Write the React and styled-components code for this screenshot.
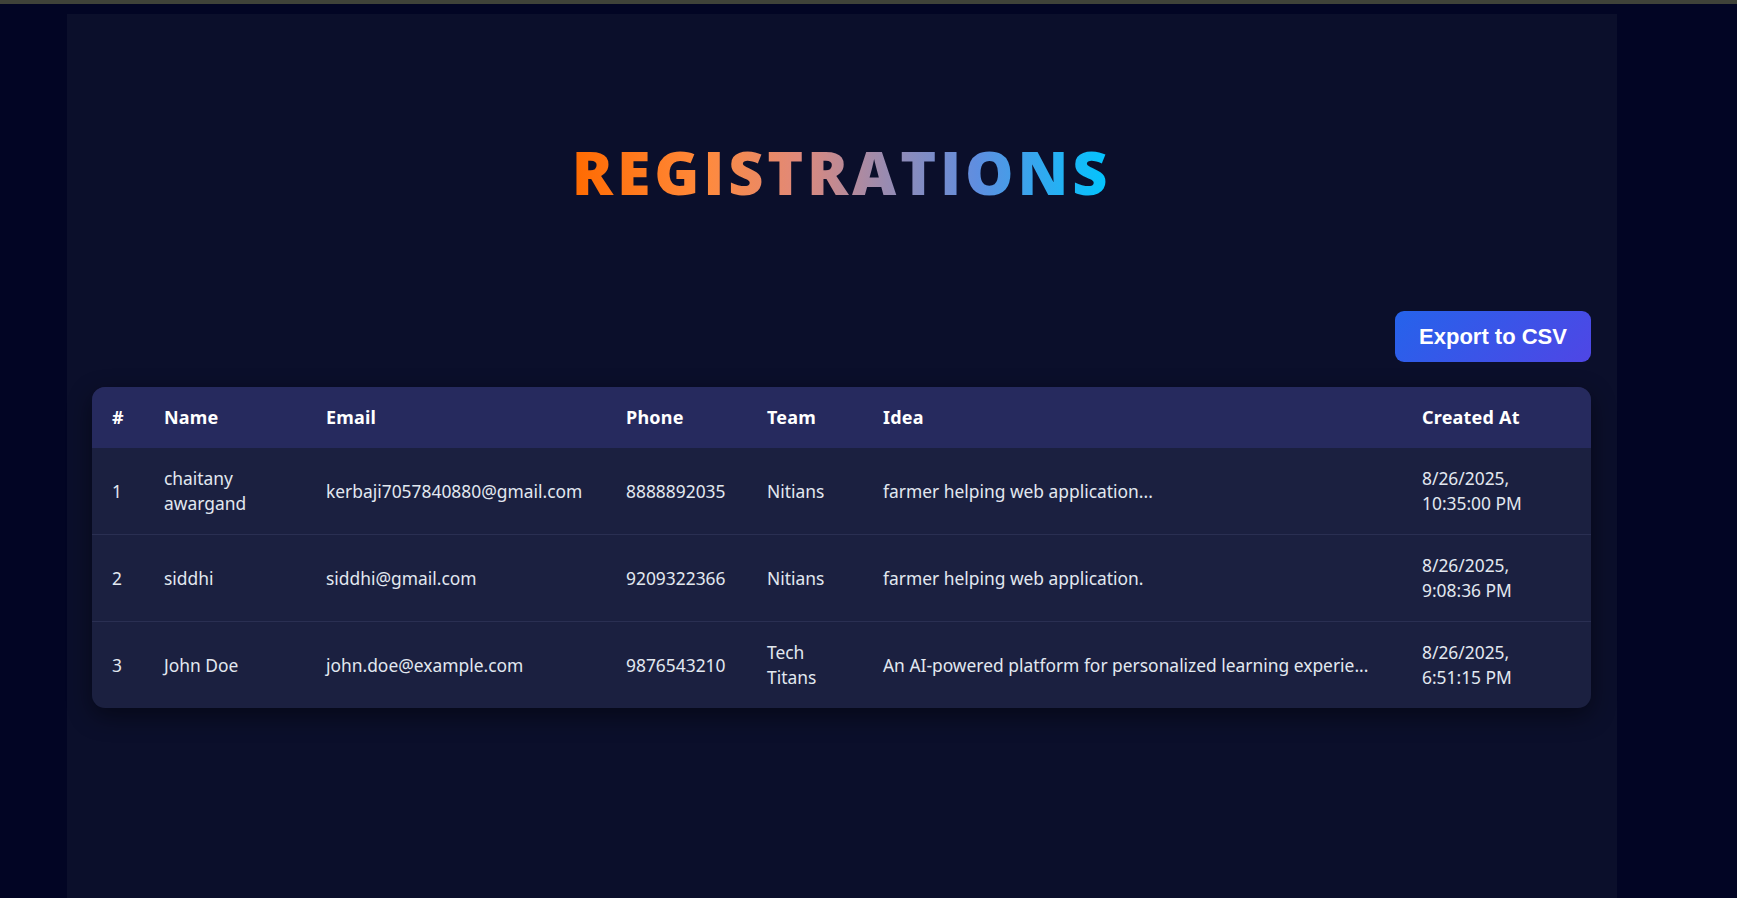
import React from "react";
import styled, { createGlobalStyle } from "styled-components";

const Global = createGlobalStyle`
  html, body { margin: 0; padding: 0; background: #020524; }
  body { font-family: "Noto Sans", "Open Sans", sans-serif; color: #e2e8f0; }
  * { box-sizing: border-box; }
`;

const TopStrip = styled.div`
  height: 4px;
  background: #3f4239;
`;

const Page = styled.div`
  min-height: 894px;
  padding: 10px 120px 0 67px;
  display: flex;
`;

const Panel = styled.main`
  width: 1550px;
  min-height: 884px;
  background: #0b0f2b;
  padding: 0 26px 0 25px;
  display: flex;
  flex-direction: column;
`;

const Title = styled.h1`
  margin: 120px 0 0;
  text-align: center;
  font-family: "Open Sans", sans-serif;
  font-weight: 800;
  font-size: 61px;
  line-height: 76px;
  letter-spacing: 3.8px;
  background: linear-gradient(90deg, #ff6a00 0%, #ff8a3d 25%, #e0897a 42%, #9a8bb0 58%, #5f8ee0 75%, #00c6ff 100%);
  -webkit-background-clip: text;
  background-clip: text;
  color: transparent;
  align-self: center;
`;

const Actions = styled.div`
  display: flex;
  justify-content: flex-end;
  margin-top: 101px;
`;

const ExportButton = styled.button`
  width: 196px;
  height: 51px;
  border: none;
  border-radius: 9px;
  background: linear-gradient(135deg, #2563eb, #4f46e5);
  color: #ffffff;
  font-family: "Liberation Sans", Arial, sans-serif;
  font-weight: 700;
  font-size: 22px;
  cursor: pointer;
`;

const TableCard = styled.div`
  margin-top: 25px;
  border-radius: 13px;
  overflow: hidden;
  background: #1b2040;
  box-shadow: 0 8px 24px rgba(0, 0, 0, 0.45);
`;

const Table = styled.table`
  width: 100%;
  border-collapse: collapse;
  table-layout: fixed;
  font-size: 17.4px;
  line-height: 25px;
`;

const Th = styled.th`
  text-align: left;
  background: #262a5e;
  color: #ffffff;
  font-weight: 700;
  font-size: 18px;
  letter-spacing: 0.2px;
  padding: 18px 20px;
  width: ${(p) => p.$w}px;
`;

const Tr = styled.tr`
  border-top: ${(p) => (p.$first ? "none" : "1px solid #2a2f52")};
`;

const Td = styled.td`
  padding: 18px 20px;
  color: #e2e8f0;
  vertical-align: middle;
  word-wrap: break-word;
`;

const Line = styled.span`
  display: block;
  white-space: nowrap;
`;

const columns = [
  { key: "#", w: 52 },
  { key: "Name", w: 162 },
  { key: "Email", w: 300 },
  { key: "Phone", w: 141 },
  { key: "Team", w: 116 },
  { key: "Idea", w: 539 },
  { key: "Created At", w: 189 },
];

const rows = [
  ["1", "chaitany awargand", "kerbaji7057840880@gmail.com", "8888892035", "Nitians", "farmer helping web application...", ["8/26/2025,", "10:35:00 PM"]],
  ["2", "siddhi", "siddhi@gmail.com", "9209322366", "Nitians", "farmer helping web application.", ["8/26/2025,", "9:08:36 PM"]],
  ["3", "John Doe", "john.doe@example.com", "9876543210", "Tech Titans", "An AI-powered platform for personalized learning experie...", ["8/26/2025,", "6:51:15 PM"]],
];

export default function App() {
  return (
    <>
      <Global />
      <TopStrip />
      <Page>
        <Panel>
          <Title>REGISTRATIONS</Title>
          <Actions>
            <ExportButton>Export to CSV</ExportButton>
          </Actions>
          <TableCard>
            <Table>
              <thead>
                <tr>
                  {columns.map((c) => (
                    <Th key={c.key} $w={c.w}>{c.key}</Th>
                  ))}
                </tr>
              </thead>
              <tbody>
                {rows.map((r, i) => (
                  <Tr key={r[0]} $first={i === 0}>
                    {r.map((cell, j) => (
                      <Td key={j}>
                        {Array.isArray(cell)
                          ? cell.map((part) => <Line key={part}>{part}</Line>)
                          : cell}
                      </Td>
                    ))}
                  </Tr>
                ))}
              </tbody>
            </Table>
          </TableCard>
        </Panel>
      </Page>
    </>
  );
}
